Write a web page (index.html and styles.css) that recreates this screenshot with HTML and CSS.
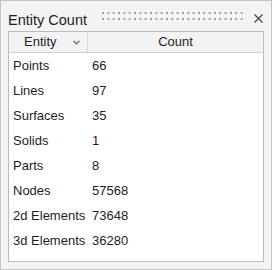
FILE: index.html
```html
<!DOCTYPE html>
<html>
<head>
<meta charset="utf-8">
<link rel="stylesheet" href="styles.css">
</head>
<body>
<div class="window">
  <div class="titlebar">
    <span class="title">Entity Count</span>
    <span class="grip"></span>
    <svg class="close" width="9" height="9" viewBox="0 0 9 9"><path d="M0.5 0.5L8.5 8.5M8.5 0.5L0.5 8.5" stroke="#444" stroke-width="1.2" fill="none"/></svg>
  </div>
  <div class="table">
    <div class="head">
      <div class="hcell first">Entity
        <svg class="chev" width="7" height="5" viewBox="0 0 7 5"><path d="M0.5 0.8L3.5 3.8L6.5 0.8" stroke="#888" stroke-width="1.6" fill="none"/></svg>
      </div>
      <div class="hcell second">Count</div>
    </div>
    <div class="body">
      <div class="row"><span class="c1">Points</span><span class="c2">66</span></div>
      <div class="row"><span class="c1">Lines</span><span class="c2">97</span></div>
      <div class="row"><span class="c1">Surfaces</span><span class="c2">35</span></div>
      <div class="row"><span class="c1">Solids</span><span class="c2">1</span></div>
      <div class="row"><span class="c1">Parts</span><span class="c2">8</span></div>
      <div class="row"><span class="c1">Nodes</span><span class="c2">57568</span></div>
      <div class="row"><span class="c1">2d Elements</span><span class="c2">73648</span></div>
      <div class="row"><span class="c1">3d Elements</span><span class="c2">36280</span></div>
    </div>
  </div>
</div>
</body>
</html>
```

FILE: styles.css
```css
html, body { margin: 0; padding: 0; }
body {
  font-family: "Liberation Sans", Arial, sans-serif;
  color: #1e1e1e;
}
.window {
  width: 272px;
  height: 270px;
  box-sizing: border-box;
  border: 1px solid #c4c4c4;
  background: #f3f3f3;
}
.titlebar {
  height: 30px;
  display: flex;
  align-items: center;
  padding-left: 7px;
}
.title {
  font-size: 14.5px;
  line-height: 18px;
  margin-top: 7px;
  white-space: nowrap;
  flex-shrink: 0;
  width: 80px;
  color: #1e1e1e;
}
.grip {
  flex-shrink: 0;
  margin-left: 14px;
  width: 142px;
  height: 8px;
  background-image: radial-gradient(circle, #9a9a9a 1.1px, transparent 1.3px);
  background-size: 5.33px 6px;
  background-position: -1.6px -2px;
}
.close {
  flex-shrink: 0;
  margin-left: 10px;
  margin-top: 4px;
}
.table {
  margin-left: 7px;
  width: 256px;
  height: 231px;
  box-sizing: border-box;
  border: 1px solid #bcbcbc;
  background: #fff;
  display: flex;
  flex-direction: column;
}
.head {
  display: flex;
  height: 20px;
  border-bottom: 1px solid #d0d0d0;
  background: #f3f3f3;
  font-size: 13px;
}
.hcell {
  display: flex;
  align-items: center;
  justify-content: center;
  line-height: 20px;
}
.first {
  width: 79px;
  border-right: 1px solid #d8d8d8;
  position: relative;
  box-sizing: border-box;
  justify-content: flex-start;
  padding-left: 15px;
}
.chev {
  position: absolute;
  left: 64px;
  top: 8px;
}
.second {
  flex: 1;
}
.body {
  flex: 1;
  font-size: 13px;
}
.row {
  display: flex;
  height: 25px;
  align-items: center;
}
.c1 {
  width: 79px;
  padding-left: 4px;
  box-sizing: border-box;
}
.c2 {
  padding-left: 4px;
}
```
